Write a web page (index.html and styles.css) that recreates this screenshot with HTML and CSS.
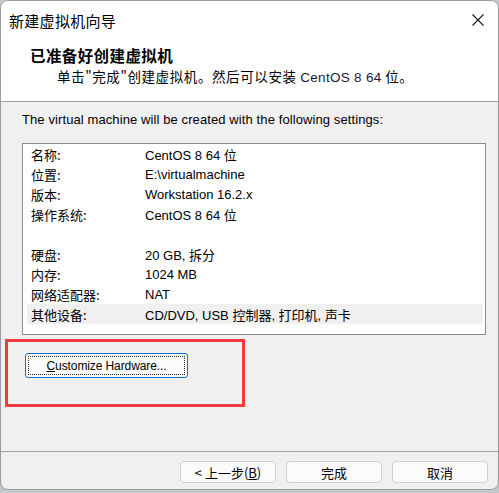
FILE: index.html
```html
<!DOCTYPE html>
<html lang="zh-CN">
<head>
  <meta charset="UTF-8" />
  <title>新建虚拟机向导</title>
  <link rel="stylesheet" href="styles.css">
</head>
<body>
  <div class="window">
    <div class="top">
      <div class="titlebar">
        <span class="title">新建虚拟机向导</span>
        <svg class="close" width="12" height="12" viewBox="0 0 12 12">
          <path d="M0.5 0.5 L11.5 11.5 M11.5 0.5 L0.5 11.5" stroke="#1a1a1a" stroke-width="1.1" fill="none"/>
        </svg>
      </div>
      <div class="header">
        <div class="heading">已准备好创建虚拟机</div>
        <div class="subheading">单击"完成"创建虚拟机。然后可以安装 <span class="latin">CentOS 8 64</span> 位。</div>
      </div>
    </div>

    <div class="content">
      <p class="intro">The virtual machine will be created with the following settings:</p>

      <div class="summary">
        <div class="row"><span class="key">名称:</span><span class="val">CentOS 8 64 位</span></div>
        <div class="row"><span class="key">位置:</span><span class="val">E:\virtualmachine</span></div>
        <div class="row"><span class="key">版本:</span><span class="val">Workstation 16.2.x</span></div>
        <div class="row"><span class="key">操作系统:</span><span class="val">CentOS 8 64 位</span></div>
        <div class="row"></div>
        <div class="row"><span class="key">硬盘:</span><span class="val">20 GB, 拆分</span></div>
        <div class="row"><span class="key">内存:</span><span class="val">1024 MB</span></div>
        <div class="row"><span class="key">网络适配器:</span><span class="val">NAT</span></div>
        <div class="row selected"><span class="key">其他设备:</span><span class="val">CD/DVD, USB 控制器, 打印机, 声卡</span></div>
      </div>

      <div class="mark">
        <button class="customize"><span class="focus"><u>C</u>ustomize Hardware...</span></button>
      </div>
    </div>

    <div class="footer">
      <button class="btn">&lt; 上一步(<u>B</u>)</button>
      <button class="btn">完成</button>
      <button class="btn">取消</button>
    </div>
  </div>
</body>
</html>
```

FILE: styles.css
```css
body {
  margin: 0;
  background: #c3c6ca;
  font-family: "Liberation Sans", "Noto Sans CJK SC", sans-serif;
  color: #000;
  width: 499px;
  height: 493px;
  overflow: hidden;
}

.window {
  width: 497px;
  height: 488px;
  border: 1px solid #9c9c9c;
  border-radius: 8px;
  background: #f0f0f0;
  overflow: hidden;
  display: flex;
  flex-direction: column;
}

.top {
  background: #fff;
  height: 100px;
  flex: none;
  border-bottom: 1px solid #a0a0a0;
}

.titlebar {
  height: 38px;
  display: flex;
  align-items: center;
  justify-content: space-between;
  padding: 0 14px 0 8px;
}

.title {
  font-family: "Noto Sans CJK SC", sans-serif;
  font-size: 15px;
  letter-spacing: 0.3px;
}

.header {
  padding: 5px 0 0 29px;
  font-family: "Noto Sans CJK SC", sans-serif;
}

.heading {
  font-size: 15.5px;
  font-weight: bold;
  line-height: 22px;
  letter-spacing: 0.4px;
}

.subheading {
  font-size: 13.5px;
  line-height: 20px;
  padding-left: 27px;
  letter-spacing: 0.6px;
}

.subheading .latin {
  font-family: "Liberation Sans", sans-serif;
  color: #1a1a3a;
  letter-spacing: 0.3px;
}

.content {
  flex: 1;
  padding: 0 0 0 3px;
  border-bottom: 1px solid #a0a0a0;
}

.intro {
  margin: 10px 0 0 18px;
  font-size: 13px;
  line-height: 16px;
  letter-spacing: 0.1px;
}

.summary {
  margin: 15px 0 0 18px;
  width: 462px;
  height: 190px;
  background: #fff;
  border: 1px solid #8d8d8d;
}

.row {
  height: 20px;
  margin: 0 2px 0 4px;
  display: flex;
  align-items: center;
  font-size: 13px;
}

.row.selected {
  background: #f0f0f0;
}

.key {
  width: 114px;
  padding-left: 4px;
  font-family: "Noto Sans CJK SC", sans-serif;
}

.val {
  font-family: "Liberation Sans", "Noto Sans CJK SC", sans-serif;
  font-size: 13px;
}

.mark {
  margin-top: 4px;
  margin-left: 1px;
  border: 3px solid #f03a3e;
  padding: 11px 0 0 17px;
  width: 217px;
  height: 51px;
}

.customize {
  width: 163px;
  height: 25px;
  padding: 2px;
  border: 1px solid #0a74d4;
  border-radius: 3px;
  background: #fcfcfc;
  font-family: "Liberation Sans", sans-serif;
  font-size: 12px;
  letter-spacing: -0.1px;
  display: flex;
}

.customize .focus {
  flex: 1;
  border: 1px dotted #222;
  display: flex;
  align-items: center;
  justify-content: center;
}

.footer {
  height: 28px;
  flex: none;
  display: flex;
  justify-content: flex-end;
  align-items: flex-start;
  gap: 10px;
  padding: 9px 10px 0 0;
}

.btn {
  width: 96px;
  height: 22px;
  border: 1px solid #cfcfcf;
  border-radius: 4px;
  background: #fbfbfb;
  font-family: "Noto Sans CJK SC", sans-serif;
  font-size: 13px;
  padding: 0;
  color: #000;
}
```
